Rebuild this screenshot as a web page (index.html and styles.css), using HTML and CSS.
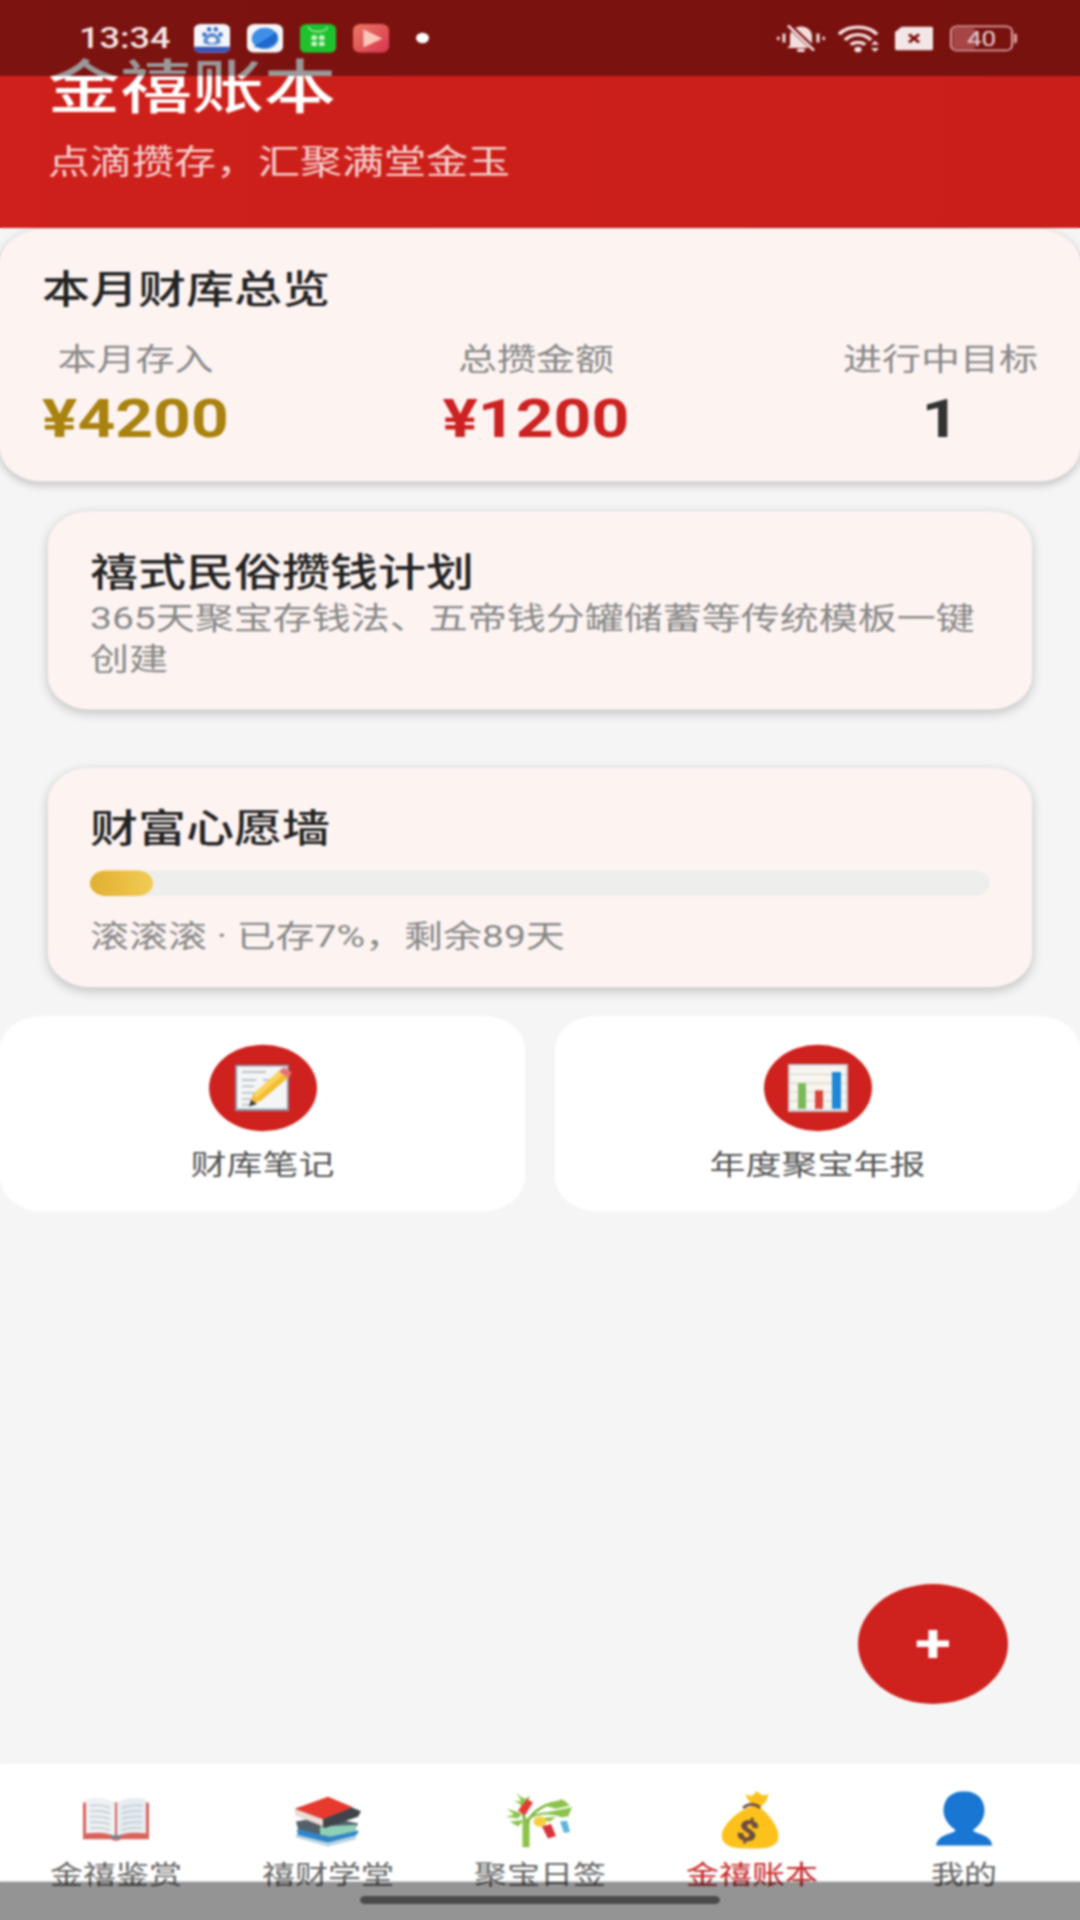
FILE: index.html
```html
<!DOCTYPE html>
<html lang="zh-CN">
<head>
    <meta charset="utf-8">
    <title>金禧账本</title>
    <link rel="stylesheet" href="styles.css">
</head>
<body>
<div class="frame">
<div class="screen">
    <!-- Page header -->
    <header class="header">
        <h1 class="header-title">金禧账本</h1>
        <p class="header-sub">点滴攒存，汇聚满堂金玉</p>
    </header>

    <main class="content">
        <!-- Monthly overview -->
        <section class="overview">
            <h2 class="card-title">本月财库总览</h2>
            <div class="stats">
                <div class="stat">
                    <div class="stat-label">本月存入</div>
                    <div class="stat-value gold">¥4200</div>
                </div>
                <div class="stat">
                    <div class="stat-label">总攒金额</div>
                    <div class="stat-value red">¥1200</div>
                </div>
                <div class="stat">
                    <div class="stat-label">进行中目标</div>
                    <div class="stat-value dark">1</div>
                </div>
            </div>
        </section>

        <section class="card">
            <h2 class="card-title">禧式民俗攒钱计划</h2>
            <p class="card-text">365天聚宝存钱法、五帝钱分罐储蓄等传统模板一键创建</p>
        </section>

        <section class="card">
            <h2 class="card-title">财富心愿墙</h2>
            <div class="progress"><div class="progress-fill" style="width: 7%"></div></div>
            <p class="card-text progress-text">滚滚滚 · 已存7%，剩余89天</p>
        </section>

        <!-- Quick actions -->
        <div class="actions">
            <div class="action">
                <div class="action-icon">
                    <svg class="action-glyph" viewBox="0 0 60 60">
                        <rect x="2" y="1" width="54" height="58" fill="#8f8fa3"/>
                        <rect x="4" y="3" width="50" height="53" fill="#f3f5f7"/>
                        <path d="M9 10h24M9 20h14M30 20h14M9 28h12M9 36h16M9 44h10M9 51h12" stroke="#a9b0b6" stroke-width="1.6"/>
                        <path d="M16 52l4-14 28-31 9 8-29 31z" fill="#f4bd33"/>
                        <path d="M20 38l28-31 4 4-28 31z" fill="#fbd35b"/>
                        <path d="M46 9l5-5 8 7-5 6z" fill="#e8707a"/>
                        <path d="M16 53l2-8 6 5z" fill="#3b3b3b"/>
                    </svg>
                </div>
                <div class="action-label">财库笔记</div>
            </div>
            <div class="action">
                <div class="action-icon">
                    <svg class="action-glyph" viewBox="0 0 60 60">
                        <rect x="0" y="0" width="60" height="60" fill="#c9ccd6"/>
                        <rect x="2" y="2" width="56" height="55" fill="#f7f5ee"/>
                        <path d="M2 13h56M2 24h56M2 35h56M2 46h56" stroke="#d5d8d2" stroke-width="1.5"/>
                        <rect x="10" y="24" width="8" height="32" fill="#7cb95a"/>
                        <rect x="27" y="33" width="8" height="23" fill="#d8443a"/>
                        <rect x="44" y="10" width="9" height="46" fill="#1e88d8"/>
                    </svg>
                </div>
                <div class="action-label">年度聚宝年报</div>
            </div>
        </div>
    </main>

    <button class="fab"><span>+</span></button>

    <!-- Tab bar -->
    <nav class="tabbar">
        <div class="tab">
            <svg class="tab-icon" viewBox="0 0 72 72">
                <path d="M3 14v46h28q5 4 10 0h28V14z" fill="#d9625c"/>
                <path d="M6 10c12-3 23-2 29 5v42c-6-5-17-6-29-4z" fill="#eef2f5"/>
                <path d="M66 10c-12-3-23-2-29 5v42c6-5 17-6 29-4z" fill="#e6edf2"/>
                <path d="M10 18c8-1 15 0 20 3M10 25c8-1 15 0 20 3M10 32c8-1 15 0 20 3M10 39c8-1 15 0 20 3M10 46c8-1 15 0 20 3M62 18c-8-1-15 0-20 3M62 25c-8-1-15 0-20 3M62 32c-8-1-15 0-20 3M62 39c-8-1-15 0-20 3M62 46c-8-1-15 0-20 3" fill="none" stroke="#c3ccd2" stroke-width="2"/>
                <path d="M31 58q5 4 10 0v-3h-10z" fill="#6f8794"/>
            </svg>
            <span class="tab-label">金禧鉴赏</span>
        </div>
        <div class="tab">
            <svg class="tab-icon" viewBox="0 0 72 72">
                <path d="M5 48l30-9 32 11-4 7-27 10-30-10z" fill="#2e86c9"/>
                <path d="M4 54l32 10 28-9v5l-28 9-32-11z" fill="#b9d3e2"/>
                <path d="M4 38l28-6 34 8-4 11-26 6-30-10z" fill="#55606a"/>
                <path d="M28 44l36-2v8l-26 7-10-3z" fill="#8fd0b8"/>
                <path d="M3 22L36 8l33 17-3 7-33 14L3 29z" fill="#3f454b"/>
                <path d="M3 22L36 7l25 13-30 15z" fill="#e8392e"/>
                <path d="M3 22l28 13v9L3 30z" fill="#ecdcd6"/>
            </svg>
            <span class="tab-label">禧财学堂</span>
        </div>
        <div class="tab">
            <svg class="tab-icon" viewBox="0 0 72 72">
                <path d="M22 70V36" stroke="#8bc34a" stroke-width="7"/>
                <path d="M23 40C28 24 44 12 62 14" fill="none" stroke="#7cb342" stroke-width="3"/>
                <path d="M23 36C30 28 46 24 60 32" fill="none" stroke="#8bc34a" stroke-width="3"/>
                <path d="M21 36C18 28 18 18 18 8" fill="none" stroke="#7cb342" stroke-width="3"/>
                <path d="M12 2l8 8 6-4-4 14-12-8 8 1zM3 22l15 6-4 6-12-2 8-3zM6 38l14-2-6 8zM40 18l18-8 8 8-14 4zM44 26l24-6-4 12-10-1zM32 34l20-2-6 6z" fill="#8bc34a"/>
                <path d="M14 24l9-14 6 4-8 16z" fill="#e53935"/>
                <circle cx="36" cy="38" r="6.5" fill="#f4d03f"/>
                <path d="M38 44l9-3 5 15-8 3z" fill="#d8323a"/>
                <path d="M56 38l7-1 3 14-6 1z" fill="#5ab4de"/>
            </svg>
            <span class="tab-label">聚宝日签</span>
        </div>
        <div class="tab">
            <svg class="tab-icon" viewBox="0 0 72 72">
                <g transform="translate(34 0) scale(0.85 1) translate(-36 0)">
                    <path d="M36 14L30 4l8 2 6-6 6 5 8-1-4 10-8 8z" fill="#fcc21b"/>
                    <path d="M44 17C60 30 72 48 69 60c-2 9-12 12-30 12C18 72 5 70 3 58 1 46 18 24 44 17z" fill="#fcc21b"/>
                    <path d="M28 21c6-6 14-6 20 0" fill="none" stroke="#6d4c41" stroke-width="3.5"/>
                </g>
                <text class="bag-sign" x="32" y="62" transform="rotate(14 32 48)">$</text>
            </svg>
            <span class="tab-label active">金禧账本</span>
        </div>
        <div class="tab">
            <svg class="tab-icon" viewBox="0 0 72 72">
                <path d="M36 0c12 0 20.500 9 20.500 24 0 11-6 20-11 24v2c3 3 17 4 19 18H8c2-14 16-15 19-18v-2C22 44 15.500 35 15.500 24 15.500 9 24 0 36 0z" fill="#1976d2"/>
            </svg>
            <span class="tab-label">我的</span>
        </div>
    </nav>

    <!-- System bars over the app -->
    <div class="statusbar">
        <span class="status-time">13:34</span>
        <div class="status-apps">
            <svg class="app-icon" viewBox="0 0 38 38">
                <rect width="38" height="38" rx="7" fill="#f4f6fb"/>
                <path d="M0 30h38v1a7 7 0 0 1-7 7H7a7 7 0 0 1-7-7z" fill="#3a55b5"/>
                <ellipse cx="11" cy="14" rx="2.400" ry="3.200" fill="#3f6fc4"/>
                <ellipse cx="16" cy="7" rx="2.400" ry="3.200" fill="#3f6fc4"/>
                <ellipse cx="23" cy="7" rx="2.400" ry="3.200" fill="#3f6fc4"/>
                <ellipse cx="28" cy="14" rx="2.400" ry="3.200" fill="#3f6fc4"/>
                <path d="M19 12c5 0 9 7 9 11 0 3-3 4-9 4s-9-1-9-4c0-4 4-11 9-11z" fill="#5f8ad0"/>
                <ellipse cx="19" cy="21" rx="4.500" ry="4" fill="#f4f6fb"/>
            </svg>
            <svg class="app-icon" viewBox="0 0 38 38">
                <rect width="38" height="38" rx="8" fill="#f7f5f5"/>
                <circle cx="19" cy="19" r="14" fill="#3d8fe8"/>
                <path d="M7 30L31 11c2 6 1 12-4 16-5 4-13 6-20 3z" fill="#2068cc"/>
            </svg>
            <svg class="app-icon" viewBox="0 0 38 38">
                <rect width="38" height="38" rx="7" fill="#1fc22e"/>
                <path d="M9 4c1 8 19 8 20 0" fill="none" stroke="#bff0c2" stroke-width="1.600"/>
                <rect x="12" y="15" width="6" height="6" rx="2" fill="#cdf3cf"/>
                <rect x="20" y="15" width="6" height="6" rx="2" fill="#cdf3cf"/>
                <rect x="12" y="23" width="6" height="6" rx="2" fill="#cdf3cf"/>
                <rect x="20" y="23" width="6" height="6" rx="2" fill="#cdf3cf"/>
            </svg>
            <svg class="app-icon" viewBox="0 0 38 38">
                <defs>
                    <linearGradient id="videoBg" x1="0" y1="0" x2="1" y2="1">
                        <stop offset="0" stop-color="#ea7a62"/>
                        <stop offset="1" stop-color="#d9344f"/>
                    </linearGradient>
                </defs>
                <rect width="38" height="38" rx="8" fill="url(#videoBg)"/>
                <path d="M11 7l20 12-20 12z" fill="#fbc6bb"/>
            </svg>
            <span class="status-dot"></span>
        </div>
        <div class="status-right">
            <svg class="mute-icon" viewBox="0 0 48 36">
                <path d="M13 27V15c0-7 5-12 11-12s11 5 11 12v12l3 3H10z" fill="#f3dede"/>
                <rect x="20" y="31" width="8" height="4" rx="2" fill="#f3dede"/>
                <path d="M13 3l26 31" stroke="#7a110e" stroke-width="6"/>
                <path d="M11 2l26 31" stroke="#f3dede" stroke-width="3"/>
                <path d="M7 12v11M41 12v11" stroke="#f3dede" stroke-width="3"/>
                <path d="M1 16v4M47 16v4" stroke="#f3dede" stroke-width="3"/>
            </svg>
            <svg class="wifi-icon" viewBox="0 0 44 36">
                <path d="M1 13C10 1 30 1 39 13M7 20C14 11 26 11 33 20M13 26c3-4 11-4 14 0" fill="none" stroke="#f3dede" stroke-width="4"/>
                <circle cx="20" cy="32" r="3.600" fill="#f3dede"/>
                <path d="M33 26l4-5 4 5zM33 30l4 5 4-5z" fill="#f3dede"/>
            </svg>
            <svg class="sim-icon" viewBox="0 0 38 30">
                <path d="M7 0h29a2 2 0 0 1 2 2v26a2 2 0 0 1-2 2H2a2 2 0 0 1-2-2V7z" fill="#f3e6e6"/>
                <path d="M14 10l10 10M24 10L14 20" stroke="#7a110e" stroke-width="3.400"/>
            </svg>
            <div class="battery">
                <div class="battery-body"><span class="battery-level"></span><span class="battery-num">40</span></div>
                <span class="battery-cap"></span>
            </div>
        </div>
    </div>
    <div class="gesturebar"><span class="home-indicator"></span></div>
</div>
</div>
</body>
</html>
```

FILE: styles.css
```css
/* General */
* {
    margin: 0;
    padding: 0;
    box-sizing: border-box;
}

html, body {
    width: 1080px;
    height: 1920px;
    overflow: hidden;
    background: #f5f5f5;
}

.frame {
    position: relative;
    width: 1080px;
    height: 1920px;
    overflow: hidden;
}

/* Soft focus of the capture, laid over everything */
.frame::after {
    content: "";
    position: absolute;
    inset: 0;
    backdrop-filter: blur(0.9px);
}

/* The capture is squashed vertically: 2400 tall app in 1920 */
.screen {
    position: relative;
    width: 1080px;
    height: 2400px;
    display: flex;
    flex-direction: column;
    background: #f5f5f5;
    font-family: Roboto, "Noto Sans CJK SC", sans-serif;
    transform: scaleY(0.8);
    transform-origin: top left;
}

/* Header */
.header {
    height: 285px;
    padding: 61px 48px 0;
    background: linear-gradient(90deg, #cf201b, #c91f1a);
    color: #fff;
}

.header-title {
    font-size: 72px;
    line-height: 100px;
    font-weight: 500;
}

.header-sub {
    margin-top: 16px;
    font-size: 42px;
    line-height: 52px;
    color: rgba(255, 255, 255, 0.8);
}

/* Content */
.content {
    flex: 1;
    display: flex;
    flex-direction: column;
    padding-top: 2px;
}

.overview {
    height: 315px;
    padding: 43px 42px 0;
    background: #fdf4f2;
    border-radius: 42px;
    box-shadow: 0 4px 10px rgba(0, 0, 0, 0.22);
}

.card {
    margin: 37px 48px 36px;
    padding: 44px 42px 37px;
    background: #fdf4f2;
    border-radius: 42px;
    box-shadow: 0 4px 12px rgba(0, 0, 0, 0.22);
}

.card-title {
    font-size: 48px;
    line-height: 65px;
    font-weight: 500;
    color: #222;
}

.card-text {
    font-size: 39px;
    line-height: 51px;
    color: #888;
}

/* Stats */
.stats {
    display: flex;
    justify-content: space-between;
    margin-top: 30px;
}

.stat {
    text-align: center;
}

.stat-label {
    font-size: 39px;
    line-height: 50px;
    color: #888;
}

.stat-value {
    margin-top: 10px;
    font-size: 66px;
    line-height: 78px;
    font-weight: 700;
}

.gold { color: #a9820f; }
.red { color: #cc2222; }
.dark { color: #333; }

/* Progress */
.progress {
    height: 32px;
    margin-top: 19px;
    background: #eeeeec;
    border-radius: 16px;
}

.progress-fill {
    height: 100%;
    border-radius: 16px;
    background: linear-gradient(90deg, #e0b030, #f2cb55);
}

.progress-text {
    margin-top: 26px;
}

/* Quick actions */
.actions {
    display: flex;
    gap: 30px;
}

.action {
    flex: 1;
    height: 244px;
    padding-top: 36px;
    background: #fff;
    border-radius: 42px;
    text-align: center;
}

.action-icon {
    display: flex;
    align-items: center;
    justify-content: center;
    width: 108px;
    height: 108px;
    margin: 0 auto;
    background: #cf221e;
    border-radius: 50%;
}

.action-glyph {
    width: 60px;
    height: 60px;
}

.action-label {
    margin-top: 18px;
    font-size: 36px;
    line-height: 50px;
    color: #555;
}

/* Floating button */
.fab {
    position: absolute;
    right: 72px;
    top: 1980px;
    display: flex;
    align-items: center;
    justify-content: center;
    width: 150px;
    height: 150px;
    background: #cf221e;
    border: none;
    border-radius: 50%;
    color: #fff;
    font-family: Roboto, sans-serif;
    font-size: 66px;
    font-weight: 700;
}

/* Tab bar */
.tabbar {
    display: flex;
    height: 197px;
    padding: 35px 10px 0;
    background: #fff;
    border-top: 1px solid #e8e8e8;
}

.tab {
    flex: 1;
    display: flex;
    flex-direction: column;
    align-items: center;
}

.tab-icon {
    width: 72px;
    height: 72px;
}

.bag-sign {
    font-family: Roboto, sans-serif;
    font-size: 36px;
    font-weight: 900;
    text-anchor: middle;
    fill: #6d4c41;
}

.tab-label {
    margin-top: 9px;
    font-size: 33px;
    line-height: 48px;
    color: #666;
}

.tab-label.active {
    color: #c62828;
}

/* System bars */
.statusbar {
    position: absolute;
    left: 0;
    top: 0;
    display: flex;
    align-items: center;
    width: 100%;
    height: 95px;
    padding: 0 63px 0 79px;
    background: rgba(0, 0, 0, 0.4);
}

.status-time {
    width: 114px;
    font-family: Roboto, sans-serif;
    font-size: 36px;
    font-weight: 500;
    color: #f5e6e6;
}

.status-apps {
    display: flex;
    align-items: center;
    gap: 15px;
}

.app-icon {
    width: 38px;
    height: 36px;
}

.status-dot {
    width: 13px;
    height: 13px;
    margin-left: 11px;
    background: #fff;
    border-radius: 50%;
}

.status-right {
    display: flex;
    align-items: center;
    margin-left: auto;
    gap: 13px;
}

.mute-icon {
    width: 48px;
    height: 36px;
}

.wifi-icon {
    width: 44px;
    height: 36px;
}

.sim-icon {
    width: 38px;
    height: 30px;
}

.battery {
    display: flex;
    align-items: center;
    gap: 1px;
    margin-left: 4px;
}

.battery-body {
    position: relative;
    display: flex;
    align-items: center;
    justify-content: center;
    width: 63px;
    height: 32px;
    overflow: hidden;
    border: 2px solid #d9a3a3;
    border-radius: 7px;
}

.battery-level {
    position: absolute;
    left: 1px;
    top: 1px;
    bottom: 1px;
    width: 38%;
    background: #a84646;
    border-radius: 3px;
}

.battery-num {
    position: relative;
    font-family: Roboto, sans-serif;
    font-size: 26px;
    color: #e8d3d3;
}

.battery-cap {
    width: 3px;
    height: 12px;
    background: #d9a3a3;
    border-radius: 0 2px 2px 0;
}

.gesturebar {
    position: absolute;
    left: 0;
    bottom: 0;
    display: flex;
    justify-content: center;
    width: 100%;
    height: 48px;
    padding-top: 18px;
    background: rgba(0, 0, 0, 0.42);
}

.home-indicator {
    width: 360px;
    height: 10px;
    background: #4a4a4a;
    border-radius: 5px;
}
```
